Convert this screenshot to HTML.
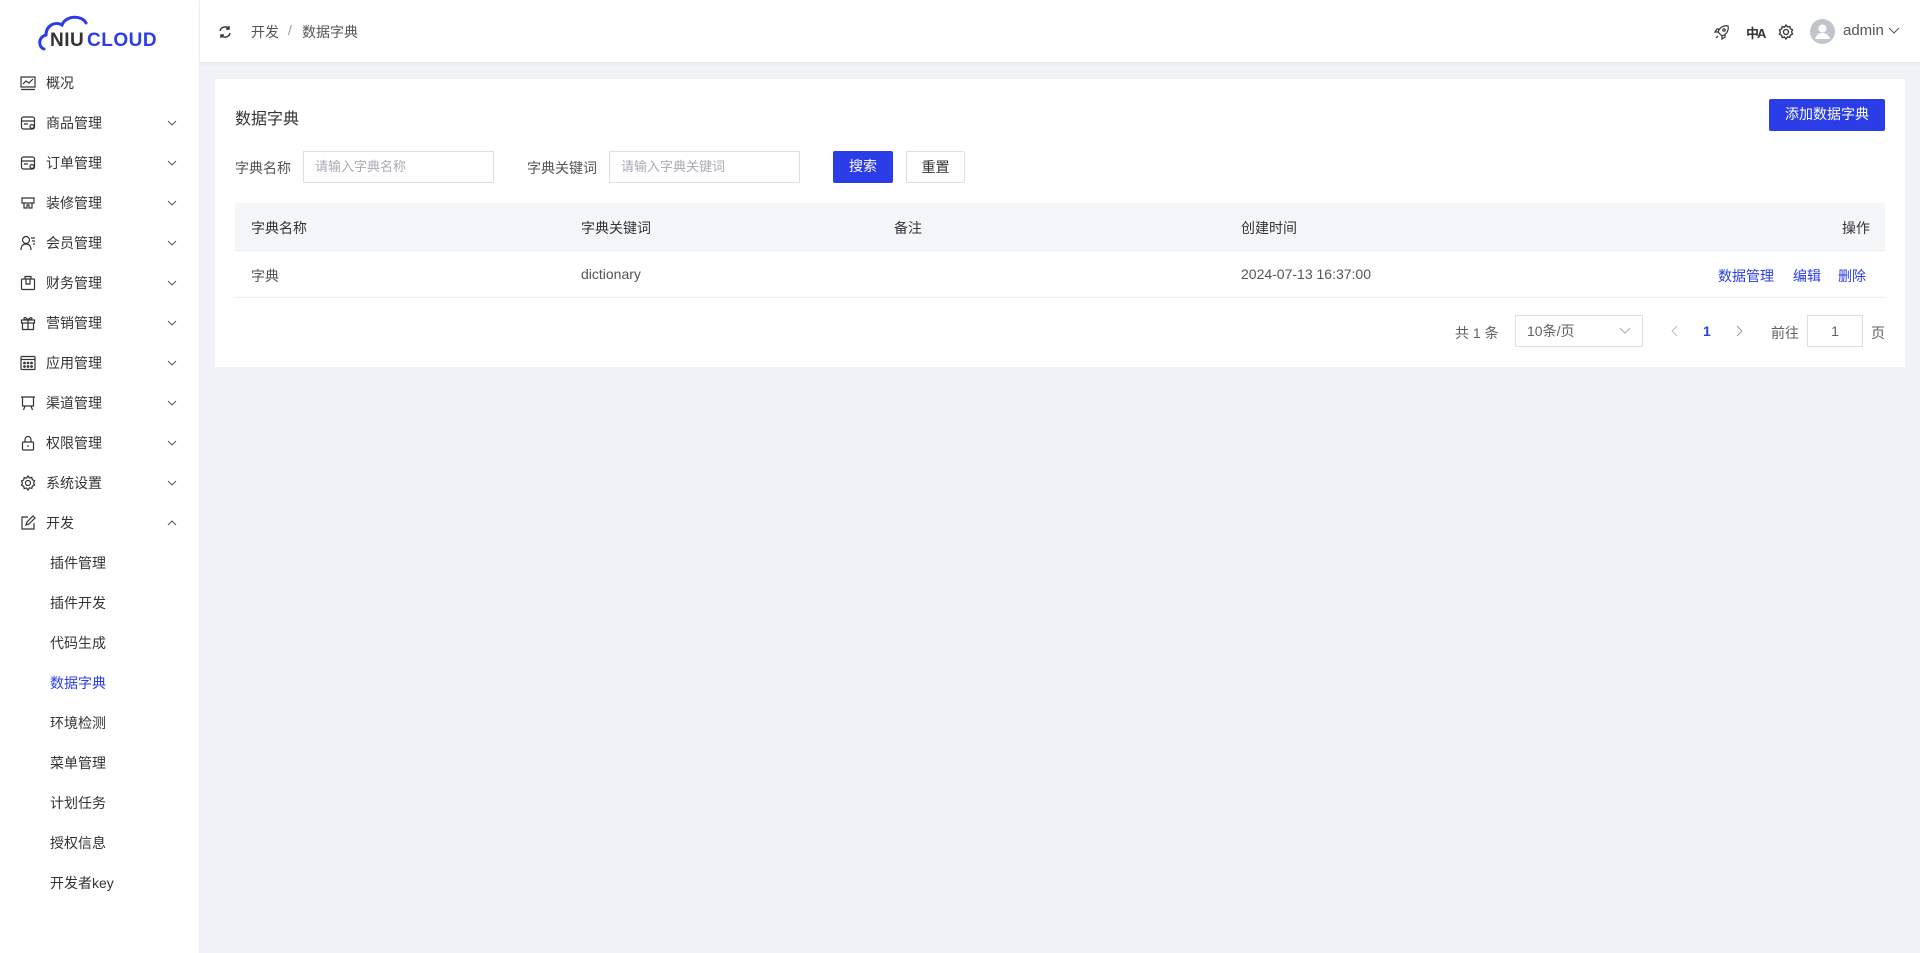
<!DOCTYPE html>
<html><head><meta charset="utf-8"><style>
*{margin:0;padding:0;box-sizing:border-box}
body{width:1920px;height:953px;background:#f0f2f5;font-family:"Liberation Sans","Noto Sans CJK SC",sans-serif;font-size:14px;color:#333;position:relative;overflow:hidden}
.a{position:absolute}
#side{left:0;top:0;width:200px;height:953px;background:#fff;border-right:1px solid #eef0f3}
.mi{position:absolute;left:0;width:200px;height:40px;line-height:40px;font-size:14px;color:#333}
.mi svg.ic{position:absolute;left:20px;top:12px}
.mi .t{position:absolute;left:46px}
.mi .ch{position:absolute;left:166px;top:16px}
.sub{position:absolute;left:50px;font-size:14px;color:#333;line-height:40px;height:40px}
#hdr{left:200px;top:0;width:1720px;height:63px;background:#fff;border-bottom:1px solid #e8eaee;box-shadow:0 1px 3px rgba(0,0,0,.04)}
#card{left:215px;top:79px;width:1690px;height:288px;background:#fff}
.inp{position:absolute;height:32px;border:1px solid #dcdfe6;background:#fff;font-size:13px;color:#a8abb2;line-height:30px;padding-left:11px}
.btn{position:absolute;height:32px;line-height:30px;text-align:center;font-size:14px}
.blue{color:#2a3de6}
</style></head><body>
<div id="side" class="a">
 <svg class="a" style="left:38px;top:13px" width="126" height="40" viewBox="0 0 126 40">
  <path d="M6 36 C0 34 0 24 8 22 C8 12 18 8 24 12 C28 2 44 2 48 10" fill="none" stroke="#2a3de6" stroke-width="3" stroke-linecap="round"/>
  <text x="12" y="33" font-family="Liberation Sans,sans-serif" font-weight="bold" font-size="19" fill="#333" letter-spacing="0.5">NIU</text>
  <text x="49" y="33" font-family="Liberation Sans,sans-serif" font-weight="bold" font-size="19" fill="#2a3de6" letter-spacing="0.5">CLOUD</text>
 </svg>
 <div class="mi" style="top:63px"><svg class="ic" width="16" height="16" viewBox="0 0 16 16" fill="none" stroke="#333" stroke-width="1.2"><rect x="1" y="2" width="14" height="10"/><path d="M1 14.5h14M3 9l3-3 3 2 4-4"/></svg><span class="t">概况</span></div>
 <div class="mi" style="top:103px"><svg class="ic" width="16" height="16" viewBox="0 0 16 16" fill="none" stroke="#333" stroke-width="1.2"><rect x="1.5" y="2" width="13" height="12" rx="2"/><path d="M1.5 6h13M4 9h4"/><circle cx="12" cy="11.5" r="2"/></svg><span class="t">商品管理</span><svg class="ch" width="12" height="8" viewBox="0 0 12 8" fill="none" stroke="#555"><path d="M2 2l4 4 4-4"/></svg></div>
 <div class="mi" style="top:143px"><svg class="ic" width="16" height="16" viewBox="0 0 16 16" fill="none" stroke="#333" stroke-width="1.2"><rect x="1.5" y="2" width="13" height="12" rx="2"/><path d="M1.5 6h13M4 9h4"/><circle cx="12" cy="11.5" r="2"/></svg><span class="t">订单管理</span><svg class="ch" width="12" height="8" viewBox="0 0 12 8" fill="none" stroke="#555"><path d="M2 2l4 4 4-4"/></svg></div>
 <div class="mi" style="top:183px"><svg class="ic" width="16" height="16" viewBox="0 0 16 16" fill="none" stroke="#333" stroke-width="1.2"><path d="M2 3h12v5H2zM4 8v5h3v-3h2v3h3V8"/></svg><span class="t">装修管理</span><svg class="ch" width="12" height="8" viewBox="0 0 12 8" fill="none" stroke="#555"><path d="M2 2l4 4 4-4"/></svg></div>
 <div class="mi" style="top:223px"><svg class="ic" width="16" height="16" viewBox="0 0 16 16" fill="none" stroke="#333" stroke-width="1.2"><circle cx="6" cy="5" r="3.5"/><path d="M1 15c0-4 2-6 5-6s5 2 5 6M11 3h4M12 6h3M13 9h2"/></svg><span class="t">会员管理</span><svg class="ch" width="12" height="8" viewBox="0 0 12 8" fill="none" stroke="#555"><path d="M2 2l4 4 4-4"/></svg></div>
 <div class="mi" style="top:263px"><svg class="ic" width="16" height="16" viewBox="0 0 16 16" fill="none" stroke="#333" stroke-width="1.2"><rect x="1.5" y="4" width="13" height="10.5" rx="1"/><path d="M5 4V1.5h6V4M6 4v5h4V4"/></svg><span class="t">财务管理</span><svg class="ch" width="12" height="8" viewBox="0 0 12 8" fill="none" stroke="#555"><path d="M2 2l4 4 4-4"/></svg></div>
 <div class="mi" style="top:303px"><svg class="ic" width="16" height="16" viewBox="0 0 16 16" fill="none" stroke="#333" stroke-width="1.2"><rect x="1.5" y="5" width="13" height="3"/><path d="M2.5 8v6.5h11V8M8 5v9.5M8 5C6 2 4 2 4 3.5S6 5 8 5c2 0 4-.5 4-1.5S10 2 8 5"/></svg><span class="t">营销管理</span><svg class="ch" width="12" height="8" viewBox="0 0 12 8" fill="none" stroke="#555"><path d="M2 2l4 4 4-4"/></svg></div>
 <div class="mi" style="top:343px"><svg class="ic" width="16" height="16" viewBox="0 0 16 16" fill="none" stroke="#333" stroke-width="1.2"><rect x="1" y="1.5" width="14" height="13" rx="1"/><path d="M1 4.5h14"/><circle cx="4.5" cy="8" r=".8"/><circle cx="8" cy="8" r=".8"/><circle cx="11.5" cy="8" r=".8"/><circle cx="4.5" cy="11.5" r=".8"/><circle cx="8" cy="11.5" r=".8"/><circle cx="11.5" cy="11.5" r=".8"/></svg><span class="t">应用管理</span><svg class="ch" width="12" height="8" viewBox="0 0 12 8" fill="none" stroke="#555"><path d="M2 2l4 4 4-4"/></svg></div>
 <div class="mi" style="top:383px"><svg class="ic" width="16" height="16" viewBox="0 0 16 16" fill="none" stroke="#333" stroke-width="1.2"><path d="M1 2h14M2.5 2v9h11V2M5 11l-1.5 4M11 11l1.5 4"/></svg><span class="t">渠道管理</span><svg class="ch" width="12" height="8" viewBox="0 0 12 8" fill="none" stroke="#555"><path d="M2 2l4 4 4-4"/></svg></div>
 <div class="mi" style="top:423px"><svg class="ic" width="16" height="16" viewBox="0 0 16 16" fill="none" stroke="#333" stroke-width="1.2"><rect x="2.5" y="7" width="11" height="8" rx="1"/><path d="M5 7V4.5a3 3 0 016 0V7M8 10v2"/></svg><span class="t">权限管理</span><svg class="ch" width="12" height="8" viewBox="0 0 12 8" fill="none" stroke="#555"><path d="M2 2l4 4 4-4"/></svg></div>
 <div class="mi" style="top:463px"><svg class="ic" width="16" height="16" viewBox="0 0 16 16" fill="none" stroke="#333" stroke-width="1.2"><circle cx="8" cy="8" r="2.5"/><path d="M8 1l1.5 2 2.3-.6.5 2.3 2.2 1-.9 2.2.9 2.2-2.2 1-.5 2.3-2.3-.6L8 15l-1.5-2-2.3.6-.5-2.3-2.2-1 .9-2.2-.9-2.2 2.2-1 .5-2.3 2.3.6z"/></svg><span class="t">系统设置</span><svg class="ch" width="12" height="8" viewBox="0 0 12 8" fill="none" stroke="#555"><path d="M2 2l4 4 4-4"/></svg></div>
 <div class="mi" style="top:503px"><svg class="ic" width="16" height="16" viewBox="0 0 16 16" fill="none" stroke="#333" stroke-width="1.2"><path d="M8 2H2v12h12V8M6 10l1-3 6-6 2 2-6 6z"/></svg><span class="t">开发</span><svg class="ch" width="12" height="8" viewBox="0 0 12 8" fill="none" stroke="#555"><path d="M2 6l4-4 4 4"/></svg></div>
 <div class="sub" style="top:543px">插件管理</div>
 <div class="sub" style="top:583px">插件开发</div>
 <div class="sub" style="top:623px">代码生成</div>
 <div class="sub blue" style="top:663px">数据字典</div>
 <div class="sub" style="top:703px">环境检测</div>
 <div class="sub" style="top:743px">菜单管理</div>
 <div class="sub" style="top:783px">计划任务</div>
 <div class="sub" style="top:823px">授权信息</div>
 <div class="sub" style="top:863px">开发者key</div>
</div>
<div id="hdr" class="a">
 <svg class="a" style="left:18px;top:25px" width="14" height="14" viewBox="0 0 14 14" fill="none" stroke="#333" stroke-width="1.4"><path d="M2 6a5 5 0 019-2M12 8a5 5 0 01-9 2M11 1v3H8M3 13v-3h3"/></svg>
 <span class="a" style="left:51px;top:22px;color:#555">开发</span>
 <span class="a" style="left:88px;top:22px;color:#999">/</span>
 <span class="a" style="left:102px;top:22px;color:#555">数据字典</span>
 <svg class="a" style="left:1514px;top:24px" width="16" height="16" viewBox="0 0 16 16" fill="none" stroke="#333" stroke-width="1.2"><path d="M6 10L4 8c2-5 6-7 10-6 1 4-1 8-6 10zM4 8H1l2-3h3M8 12v3l3-2v-3M4 12l-2 2"/><circle cx="10" cy="6" r="1.2"/></svg>
 <span class="a" style="left:1546px;top:23px;font-size:13px;font-weight:bold;color:#333;letter-spacing:-2px">中A</span>
 <svg class="a" style="left:1578px;top:24px" width="16" height="16" viewBox="0 0 16 16" fill="none" stroke="#333" stroke-width="1.3"><circle cx="8" cy="8" r="2.5"/><path d="M8 1l1.5 2 2.3-.6.5 2.3 2.2 1-.9 2.2.9 2.2-2.2 1-.5 2.3-2.3-.6L8 15l-1.5-2-2.3.6-.5-2.3-2.2-1 .9-2.2-.9-2.2 2.2-1 .5-2.3 2.3.6z"/></svg>
 <svg class="a" style="left:1610px;top:19px" width="25" height="25" viewBox="0 0 25 25"><circle cx="12.5" cy="12.5" r="12.5" fill="#c0c4cc"/><circle cx="12.5" cy="9.5" r="4" fill="#fff"/><path d="M5 20c1-4 4-6 7.5-6s6.5 2 7.5 6z" fill="#fff"/></svg>
 <span class="a" style="left:1643px;top:22px;font-size:15px;color:#555">admin</span>
 <svg class="a" style="left:1688px;top:27px" width="12" height="8" viewBox="0 0 12 8" fill="none" stroke="#555"><path d="M1 1l5 5 5-5"/></svg>
</div>
<div id="card" class="a">
 <span class="a" style="left:20px;top:26px;font-size:16px;color:#333">数据字典</span>
 <div class="btn" style="left:1554px;top:20px;width:116px;background:#2a3de6;color:#fff;border-radius:2px">添加数据字典</div>
 <span class="a" style="left:20px;top:79px;color:#555">字典名称</span>
 <div class="inp" style="left:88px;top:72px;width:191px">请输入字典名称</div>
 <span class="a" style="left:312px;top:79px;color:#555">字典关键词</span>
 <div class="inp" style="left:394px;top:72px;width:191px">请输入字典关键词</div>
 <div class="btn" style="left:618px;top:72px;width:60px;background:#2a3de6;color:#fff;border-radius:2px">搜索</div>
 <div class="btn" style="left:691px;top:72px;width:59px;border:1px solid #dcdfe6;color:#333;border-radius:2px">重置</div>
 <div class="a" style="left:20px;top:124px;width:1650px;height:48px;background:#f5f6f8;border-bottom:1px solid #ebeef5"></div>
 <span class="a" style="left:36px;top:139px">字典名称</span>
 <span class="a" style="left:366px;top:139px">字典关键词</span>
 <span class="a" style="left:679px;top:139px">备注</span>
 <span class="a" style="left:1026px;top:139px">创建时间</span>
 <span class="a" style="left:1627px;top:139px">操作</span>
 <div class="a" style="left:20px;top:218px;width:1650px;height:1px;background:#ebeef5"></div>
 <span class="a" style="left:36px;top:187px;color:#555">字典</span>
 <span class="a" style="left:366px;top:187px;color:#555">dictionary</span>
 <span class="a" style="left:1026px;top:187px;color:#555">2024-07-13 16:37:00</span>
 <span class="a blue" style="left:1503px;top:187px">数据管理</span>
 <span class="a blue" style="left:1578px;top:187px">编辑</span>
 <span class="a blue" style="left:1623px;top:187px">删除</span>
 <span class="a" style="left:1240px;top:244px;color:#606266">共 1 条</span>
 <div class="inp" style="left:1300px;top:236px;width:128px;color:#606266;font-size:14px">10条/页</div>
 <svg class="a" style="left:1404px;top:248px" width="12" height="8" viewBox="0 0 12 8" fill="none" stroke="#aaa"><path d="M1 1l5 5 5-5"/></svg>
 <svg class="a" style="left:1455px;top:246px" width="10" height="12" viewBox="0 0 10 12" fill="none" stroke="#bbb"><path d="M7 1L2 6l5 5"/></svg>
 <span class="a blue" style="left:1488px;top:244px;font-weight:bold">1</span>
 <svg class="a" style="left:1519px;top:246px" width="10" height="12" viewBox="0 0 10 12" fill="none" stroke="#999"><path d="M3 1l5 5-5 5"/></svg>
 <span class="a" style="left:1556px;top:244px;color:#606266">前往</span>
 <div class="inp" style="left:1592px;top:236px;width:56px;color:#606266;font-size:14px;text-align:center;padding:0">1</div>
 <span class="a" style="left:1656px;top:244px;color:#606266">页</span>
</div>
</body></html>
